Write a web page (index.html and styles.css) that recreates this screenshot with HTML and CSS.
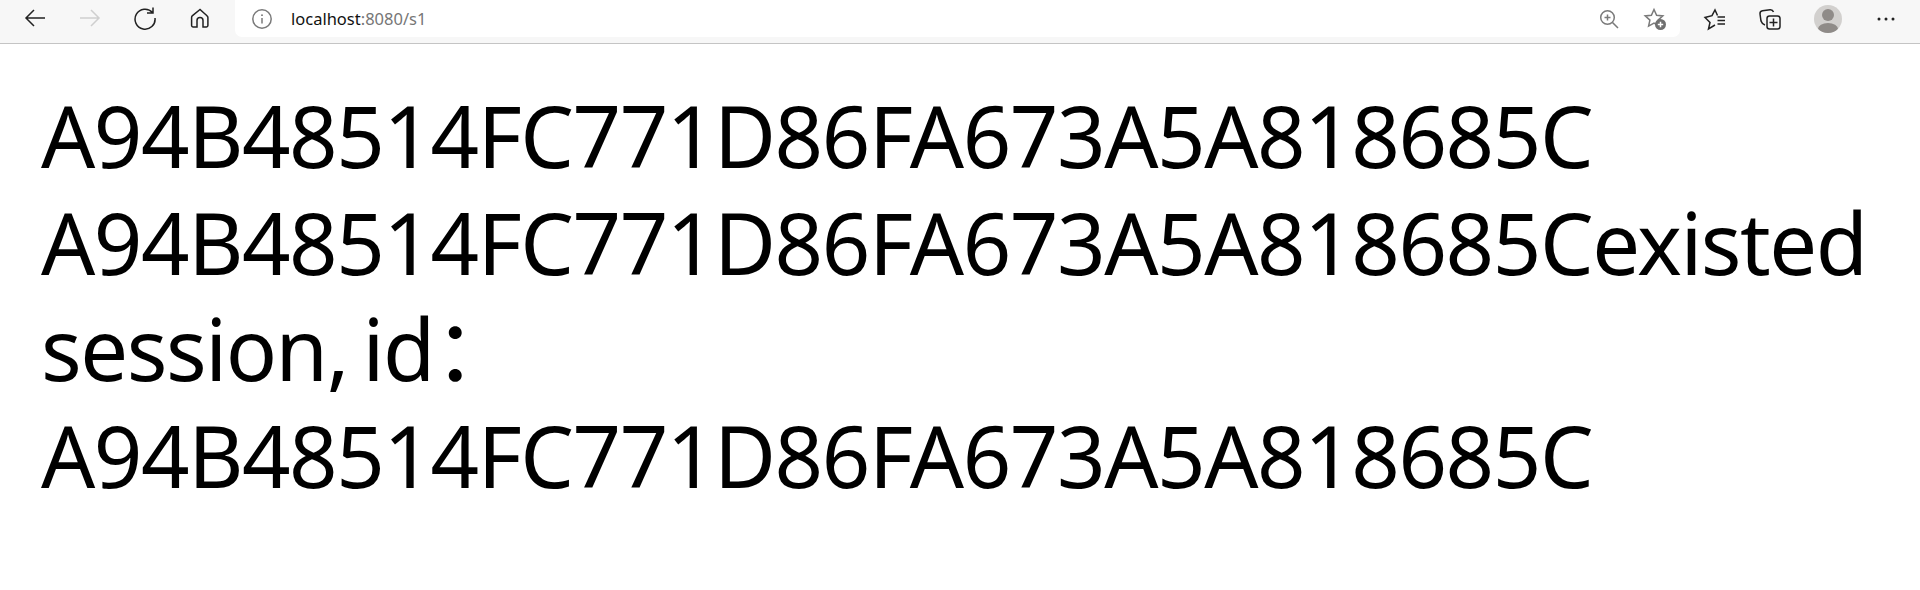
FILE: index.html
```html
<!DOCTYPE html>
<html lang="en">
<head>
  <meta charset="UTF-8">
  <title>localhost:8080/s1</title>
  <link rel="stylesheet" href="styles.css">
</head>
<body>

<div class="toolbar">
  <div class="nav-buttons">
    <button class="tool-btn" aria-label="Back">
      <svg viewBox="0 0 24 24" width="24" height="24"><path d="M22 12H3M11 4l-8 8 8 8" class="line dark"/></svg>
    </button>
    <button class="tool-btn" aria-label="Forward">
      <svg viewBox="0 0 24 24" width="24" height="24"><path d="M2 12h19M13 4l8 8-8 8" class="line faded"/></svg>
    </button>
    <button class="tool-btn" aria-label="Refresh">
      <svg viewBox="0 0 24 24" width="24" height="24"><path d="M19.500 6.500A10 10 0 1 0 22 12M20 1.500v5.500h-6" class="line dark"/></svg>
    </button>
    <button class="tool-btn" aria-label="Home">
      <svg viewBox="0 0 24 24" width="24" height="24"><path d="M12 3.500l-7.500 6.200c-.6.500-.9 1.100-.9 1.800v8c0 .8.600 1.400 1.400 1.400H9v-6.400a3 3 0 0 1 6 0V21h3.500c.8 0 1.400-.6 1.400-1.400v-8c0-.7-.3-1.300-.9-1.800z" class="line dark"/></svg>
    </button>
  </div>

  <div class="address-bar">
    <svg class="site-info" viewBox="0 0 20 20" width="20" height="20">
      <circle cx="10" cy="10" r="9.200" class="line grey"/>
      <path d="M10 9v5.500" class="line grey"/>
      <circle cx="10" cy="6.200" r=".9" class="fill-grey"/>
    </svg>
    <span class="url"><span class="host">localhost</span>:8080/s1</span>
    <div class="address-actions">
      <svg viewBox="0 0 20 20" width="20" height="20">
        <circle cx="8.500" cy="8.500" r="6.800" class="line grey"/>
        <path d="M13.500 13.500l5.500 5.500M8.500 5.500v6M5.500 8.500h6" class="line grey"/>
      </svg>
      <svg viewBox="0 0 24 24" width="24" height="24">
        <path d="M11 2.500l2.600 5.800 6.200.6-4.700 4.200 1.300 6-5.400-3.100-5.400 3.100 1.300-6L2.200 8.900l6.200-.6z" class="line grey"/>
        <circle cx="17.500" cy="17.500" r="5.500" class="fill-grey"/>
        <path d="M17.500 14.800v5.400M14.800 17.500h5.400" class="line white"/>
      </svg>
    </div>
  </div>

  <div class="browser-actions">
    <button class="tool-btn" aria-label="Favorites">
      <svg viewBox="0 0 24 24" width="24" height="24"><path d="M14.500 8.500L12 3 9 8.700 2 10.500l5 5L5.500 22l6.500-4M14.500 10H22M14.500 13.500H22M14.500 17H22" class="line dark"/></svg>
    </button>
    <button class="tool-btn" aria-label="Collections">
      <svg viewBox="0 0 24 24" width="24" height="24"><path d="M7 18c-3-1-3.500-2.500-4-4L2 7c-.2-2 1-3 2.500-3.300l7.500-1c2-.2 3 .8 3.500 2.300" class="line dark"/><rect x="9" y="9" width="13" height="13" rx="2.500" class="line dark"/><path d="M15.500 11.500v8M11.500 15.500h8" class="line dark"/></svg>
    </button>
    <div class="avatar">
      <span class="avatar-head"></span>
      <span class="avatar-body"></span>
    </div>
    <button class="tool-btn" aria-label="Settings and more">
      <svg viewBox="0 0 24 24" width="24" height="24"><circle cx="5" cy="12" r="1.500" class="fill-dark"/><circle cx="12" cy="12" r="1.500" class="fill-dark"/><circle cx="19" cy="12" r="1.500" class="fill-dark"/></svg>
    </button>
  </div>
</div>

<div class="page-text">
  A94B48514FC771D86FA673A5A818685C<br>
  A94B48514FC771D86FA673A5A818685Cexisted session, id：<br>
  A94B48514FC771D86FA673A5A818685C
</div>

</body>
</html>
```

FILE: styles.css
```css
html, body {
  margin: 0;
  padding: 0;
  background: white;
}

body {
  font-family: "Noto Sans", "Noto Sans CJK SC", sans-serif;
  height: 590px;
  overflow: hidden;
}

.toolbar {
  display: flex;
  align-items: flex-start;
  height: 43px;
  background-color: #f7f7f7;
  border-bottom: 1px solid #c4c4c4;
}

.nav-buttons {
  display: flex;
  gap: 23px;
  width: 235px;
  padding: 6px 0 0 19px;
  box-sizing: border-box;
}

.tool-btn {
  width: 32px;
  height: 24px;
  padding: 0;
  border: none;
  background: none;
  display: flex;
  justify-content: center;
}

.address-bar {
  display: flex;
  align-items: center;
  width: 1445px;
  height: 37px;
  padding: 0 13px 0 17px;
  box-sizing: border-box;
  background: white;
  border-radius: 0 0 7px 7px;
}

.site-info {
  margin-right: 19px;
}

.url {
  font-size: 16.500px;
  color: #767676;
}

.host {
  color: #111;
}

.address-actions {
  display: flex;
  align-items: center;
  gap: 24px;
  margin-left: auto;
}

.browser-actions {
  display: flex;
  align-items: center;
  gap: 23px;
  height: 37px;
  padding: 0 0 0 19px;
}

.avatar {
  position: relative;
  width: 28px;
  height: 28px;
  margin: 1px 5px 0;
  border-radius: 50%;
  background: #d2d0ce;
  overflow: hidden;
}

.avatar-head {
  position: absolute;
  top: 4px;
  left: 8px;
  width: 12px;
  height: 12px;
  border-radius: 50%;
  background: #8f8b88;
}

.avatar-body {
  position: absolute;
  top: 18px;
  left: 4px;
  width: 20px;
  height: 12px;
  border-radius: 50%;
  background: #8f8b88;
}

.line {
  fill: none;
  stroke-width: 1.500;
}

.dark { stroke: #222; }
.faded { stroke: #cfcfcf; }
.grey { stroke: #7a7a7a; }
.white { stroke: white; }
.fill-grey { fill: #6f6f6f; }
.fill-dark { fill: #222; }

.page-text {
  margin: 0;
  padding: 38px 40px 0 41px;
  font-size: 85px;
  line-height: 106.500px;
  color: black;
  letter-spacing: -1.470px;
  word-spacing: -6px;
}
```
